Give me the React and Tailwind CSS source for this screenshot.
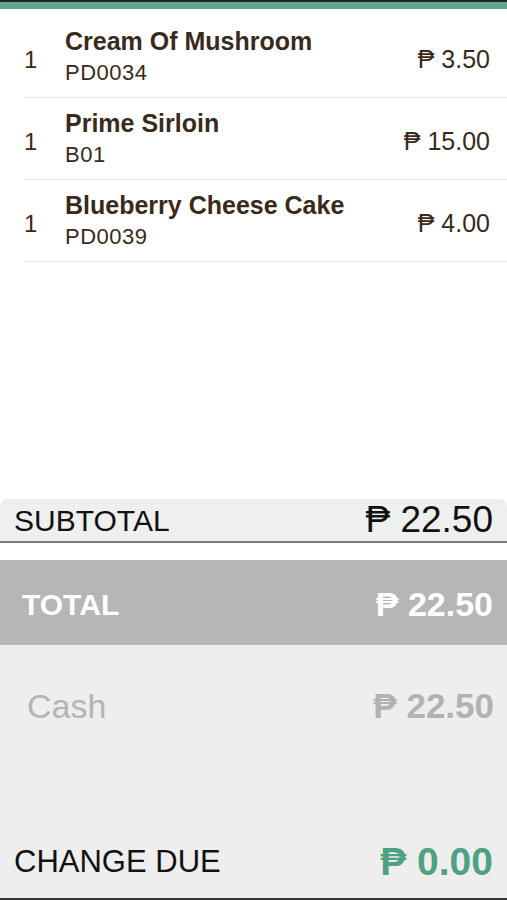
const items = [
  { qty: 1, name: 'Cream Of Mushroom', code: 'PD0034', price: '3.50' },
  { qty: 1, name: 'Prime Sirloin', code: 'B01', price: '15.00' },
  { qty: 1, name: 'Blueberry Cheese Cake', code: 'PD0039', price: '4.00' },
];

export default function App() {
  return (
    <div className="h-[900px] w-full flex flex-col bg-white overflow-hidden font-['Liberation_Sans',Arial,sans-serif]">
      <div className="h-[2px] bg-[#1f2a26]" />
      <div className="h-[7px] bg-[#5ea88c]" />

      {/* order lines */}
      <div className="flex-1 pl-[24px] pt-[7px]">
        {items.map((item) => (
          <div key={item.code} className="h-[82px] flex items-center border-b border-[#e6e6e6] pr-[17px]">
            <span className="w-[41px] text-[24px] text-[#3a2a1c] mt-[6px]">{item.qty}</span>
            <div className="flex-1 flex flex-col">
              <span className="text-[25px] font-bold text-[#3a2a1c] leading-[30px]">{item.name}</span>
              <span className="text-[22px] text-[#3a2a1c] leading-[28px] mt-[3px] tracking-[0.5px]">{item.code}</span>
            </div>
            <span className="text-[25px] text-[#3a2a1c] mt-[7px]">₱ {item.price}</span>
          </div>
        ))}
      </div>

      {/* subtotal */}
      <div className="h-[44px] bg-[#efefef] rounded-t-[8px] border-b-2 border-[#7c7c7c] flex items-center justify-between pl-[14px] pr-[14px]">
        <span className="text-[30px] text-[#111]">SUBTOTAL</span>
        <span className="text-[37px] text-[#111]">₱ 22.50</span>
      </div>
      <div className="h-[17px] bg-white" />

      {/* total */}
      <div className="h-[85px] bg-[#b6b6b6] flex items-center justify-between pl-[22px] pr-[14px] pt-[3px]">
        <span className="text-[30px] font-bold text-white">TOTAL</span>
        <span className="text-[34px] font-bold text-white">₱ 22.50</span>
      </div>

      {/* tender */}
      <div className="h-[255px] bg-[#eeeeee] border-b-2 border-[#333] flex flex-col">
        <div className="h-[122px] flex items-center justify-between pl-[27px] pr-[13px]">
          <span className="text-[34px] text-[#b4b4b4]">Cash</span>
          <span className="text-[35px] font-bold text-[#b2b2b2]">₱ 22.50</span>
        </div>
        <div className="flex-1" />
        <div className="h-[72px] flex items-center justify-between pl-[14px] pr-[14px]">
          <span className="text-[31px] text-[#111]">CHANGE DUE</span>
          <span className="text-[39px] font-bold text-[#4ea283]">₱ 0.00</span>
        </div>
      </div>
    </div>
  );
}
